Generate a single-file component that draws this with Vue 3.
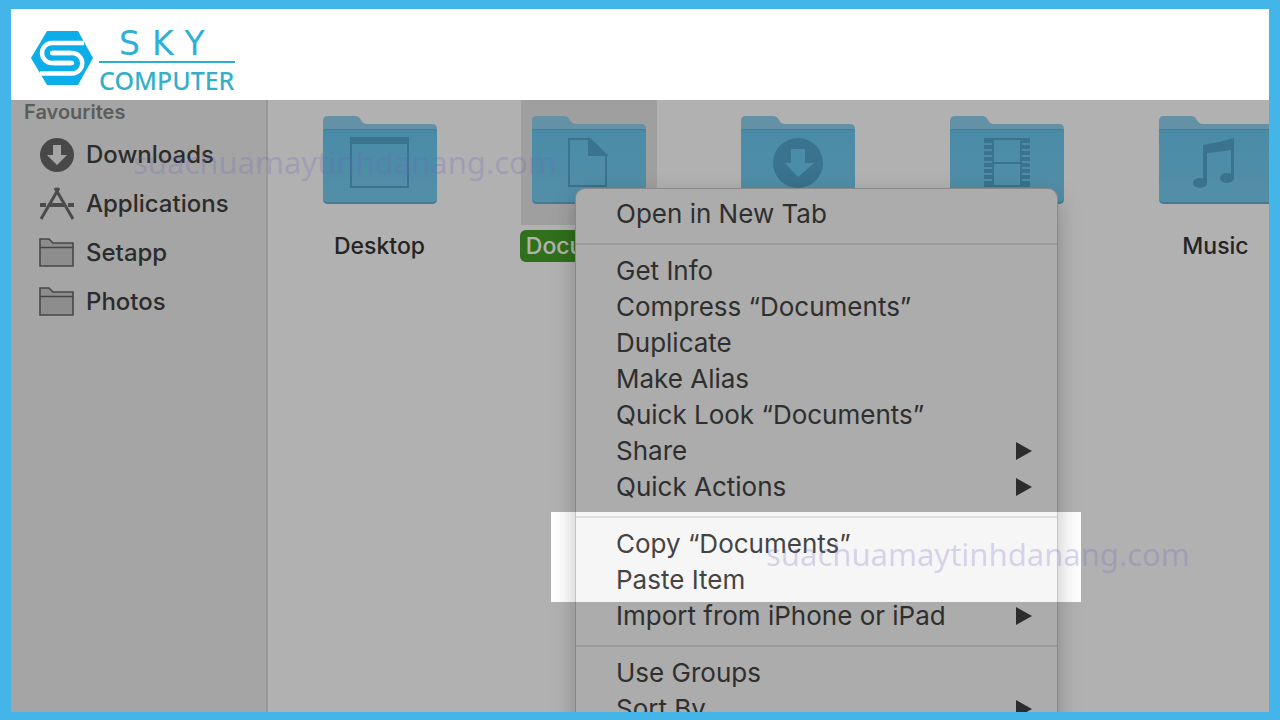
<script setup>
const places = [
  { name: 'Downloads', icon: 'download' },
  { name: 'Applications', icon: 'apps' },
  { name: 'Setapp', icon: 'folder' },
  { name: 'Photos', icon: 'folder' },
]

const folders = [
  { name: 'Desktop', glyph: 'window' },
  { name: 'Documents', glyph: 'page', selected: true },
  { name: 'Downloads', glyph: 'arrow' },
  { name: 'Movies', glyph: 'film' },
  { name: 'Music', glyph: 'note' },
]

const groups = [
  [{ label: 'Open in New Tab' }],
  [
    { label: 'Get Info' },
    { label: 'Compress “Documents”' },
    { label: 'Duplicate' },
    { label: 'Make Alias' },
    { label: 'Quick Look “Documents”' },
    { label: 'Share', sub: true },
    { label: 'Quick Actions', sub: true },
  ],
  [
    { label: 'Copy “Documents”' },
    { label: 'Paste Item' },
    { label: 'Import from iPhone or iPad', sub: true },
  ],
  [{ label: 'Use Groups' }, { label: 'Sort By', sub: true }],
]
</script>

<template>
  <div class="frame">
    <header class="brand">
      <svg class="mark" viewBox="0 0 64 64" aria-hidden="true">
        <path fill="#0caeea" d="M17 4H48L63 31L48 58H17L1 31Z" />
        <g fill="none" stroke="#fff" stroke-width="4.4">
          <path d="M54 16H22A10 10 0 0 0 22 36H41" />
          <path d="M10 46.500H42A10 10 0 0 0 42 26H22" />
          <path stroke-linecap="round" d="M22 26H40M24 36H42" />
        </g>
      </svg>
      <div class="words">
        <span class="sky">SKY</span>
        <span class="computer">COMPUTER</span>
      </div>
    </header>

    <main class="stage">
      <nav class="sidebar" aria-label="Favourites">
        <h2>Favourites</h2>
        <a v-for="p in places" :key="p.name" href="#" class="place">
          <svg viewBox="0 0 36 36" aria-hidden="true">
            <template v-if="p.icon === 'download'">
              <circle cx="18" cy="18" r="17" fill="#686868" />
              <path fill="#ededed" d="M14 8h8v10h6L18 28 8 18h6z" />
            </template>
            <g v-else-if="p.icon === 'apps'" fill="none" stroke="#6c6c6c" stroke-width="3">
              <path d="M16 2L34 33M20 2L2 33" />
              <path stroke-width="4" d="M1 19H7M11 19H25M29 19H35" />
            </g>
            <g v-else stroke="#666" stroke-width="1.6">
              <path fill="#cacaca" d="M1 4h9l4 4h20v23H1z" />
              <path fill="none" d="M1 12.500h33" />
            </g>
          </svg>
          <span>{{ p.name }}</span>
        </a>
      </nav>

      <section class="files">
        <figure v-for="f in folders" :key="f.name" class="file" :class="{ selected: f.selected }">
          <div class="tile">
            <svg viewBox="0 0 114 90" aria-hidden="true">
              <defs>
                <linearGradient :id="'face-' + f.name" x1="0" y1="0" x2="0" y2="1">
                  <stop offset="0" stop-color="#69c8f0" />
                  <stop offset="1" stop-color="#78cdf0" />
                </linearGradient>
              </defs>
              <path fill="#90d0ec" d="M0 30V6q0-5 5-5H32q4 0 6 4t6 4H109q5 0 5 5V30z" />
              <path fill="#5fb0d6" d="M0 16q0-2 3-2H111q3 0 3 2V84q0 5-5 5H5q-5 0-5-5z" />
              <path :fill="'url(#face-' + f.name + ')'" d="M0 17q0-2 3-2H111q3 0 3 2V83q0 4-5 4H5q-5 0-5-4z" />
              <g v-if="f.glyph === 'window'" fill="none" stroke="#52a5cb" stroke-width="2">
                <rect x="28" y="23" width="57" height="49" />
                <path stroke-width="6" d="M28 26H85" />
              </g>
              <g v-else-if="f.glyph === 'page'" stroke="#52a5cb" stroke-width="2">
                <path fill="none" d="M37 24H58L74 40V71H37z" />
                <path fill="#52a5cb" d="M57 24V40H74z" />
              </g>
              <g v-else-if="f.glyph === 'arrow'">
                <circle cx="57" cy="48" r="25" fill="#52a5cb" />
                <path fill="#6ccbf3" d="M50 34h14v14h9L57 62 44 48h6z" />
              </g>
              <g v-else-if="f.glyph === 'film'" fill="none" stroke="#52a5cb">
                <path stroke-width="8" stroke-dasharray="4 2" d="M38 24V72M76 24V72" />
                <path stroke-width="2" d="M34 24H80M43 23V72M71 23V72M43 48H71M34 71H80" />
              </g>
              <g v-else fill="#52a5cb">
                <path d="M44 30Q60 28 75 23V63H72V35Q60 37 48 38V68H44z" />
                <ellipse cx="41" cy="68" rx="7" ry="5" />
                <ellipse cx="68" cy="63" rx="7" ry="5" />
              </g>
            </svg>
          </div>
          <figcaption>{{ f.name }}</figcaption>
        </figure>
      </section>

      <div class="menu" role="menu">
        <div v-for="(g, i) in groups" :key="i" class="group" role="group">
          <button v-for="item in g" :key="item.label" type="button" role="menuitem">
            <span>{{ item.label }}</span>
            <svg v-if="item.sub" viewBox="0 0 16 18" aria-hidden="true">
              <path fill="#404040" d="M0 0L16 9L0 18z" />
            </svg>
          </button>
        </div>
      </div>

      <div class="spotlight"></div>
      <span class="watermark first">suachuamaytinhdanang.com</span>
      <span class="watermark second">suachuamaytinhdanang.com</span>
    </main>
  </div>
</template>

<style>
body {
  margin: 0;
}
</style>

<style scoped>
.frame {
  box-sizing: border-box;
  min-height: 100vh;
  display: flex;
  flex-direction: column;
  border: solid #43b5e8;
  border-width: 9px 11px 8px;
  background: #fff;
  font-family: Inter, "Liberation Sans", sans-serif;
}

.brand {
  box-sizing: border-box;
  height: 91px;
  display: flex;
  align-items: flex-start;
  gap: 5px;
  padding: 18px 19px 0;
}

.mark {
  width: 64px;
  height: 64px;
}

.words {
  display: flex;
  flex-direction: column;
  width: 136px;
  font-family: "Noto Sans", "Open Sans", sans-serif;
  color: #2bb0d8;
}

.sky {
  padding-left: 20px;
  border-bottom: 2px solid #2fafd0;
  font-family: "DejaVu Sans", sans-serif;
  font-size: 33px;
  line-height: 34px;
  letter-spacing: 12px;
  white-space: nowrap;
}

.computer {
  font-size: 25px;
  line-height: 34px;
  font-weight: 500;
  color: #35afc9;
}

.stage {
  position: relative;
  flex: 1;
  display: flex;
  overflow: hidden;
}

.sidebar {
  box-sizing: border-box;
  flex: 0 0 257px;
  border-right: 2px solid #d9d9d9;
  background: #ededed;
}

h2 {
  margin: 0 0 6px;
  padding-left: 13px;
  font-size: 20px;
  line-height: 24px;
  font-weight: 600;
  color: #858585;
}

.place {
  display: flex;
  align-items: center;
  gap: 11px;
  height: 49px;
  padding-left: 28px;
  font-size: 24px;
  font-weight: 500;
  color: #404040;
  text-decoration: none;
}

.place svg {
  width: 36px;
  height: 36px;
}

.files {
  flex: 1;
  min-width: 0;
  display: flex;
  padding-left: 7px;
  overflow: hidden;
  background: #fefefe;
}

.file {
  flex: 0 0 209px;
  display: flex;
  flex-direction: column;
  align-items: center;
  gap: 5px;
  margin: 0;
}

.tile {
  box-sizing: border-box;
  width: 136px;
  height: 125px;
  padding: 15px 11px;
}

.tile svg {
  display: block;
  width: 114px;
  height: 90px;
}

figcaption {
  padding: 0 6px;
  border-radius: 6px;
  font-size: 23px;
  line-height: 32px;
  font-weight: 500;
  color: #343434;
}

.selected .tile {
  background: #e4e4e4;
}

.selected figcaption {
  background: #45a028;
  color: #fff;
}

.menu {
  position: absolute;
  left: 565px;
  top: 89px;
  width: 481px;
  padding: 7px 0;
  border-radius: 9px 9px 0 0;
  background: #f6f6f6;
  box-shadow: 0 0 0 1px #c4c4c4, 0 8px 24px rgba(0, 0, 0, 0.25);
}

.group + .group::before {
  content: "";
  display: block;
  height: 2px;
  margin: 11px 0 8px;
  background: #dedede;
}

.menu button {
  display: flex;
  align-items: center;
  justify-content: space-between;
  width: 100%;
  height: 36px;
  padding: 0 25px 0 40px;
  border: 0;
  background: none;
  font: 400 26px/36px Inter, "Liberation Sans", sans-serif;
  color: #444;
  text-align: left;
}

.menu svg {
  width: 16px;
  height: 18px;
}

.spotlight {
  position: absolute;
  left: 540px;
  top: 412px;
  width: 530px;
  height: 90px;
  box-shadow: 0 0 0 200vmax rgba(0, 0, 0, 0.3);
  pointer-events: none;
}

.watermark {
  position: absolute;
  font: 400 31px/40px "Noto Sans", "Open Sans", sans-serif;
  color: rgba(110, 100, 190, 0.25);
  pointer-events: none;
}

.first {
  left: 122px;
  top: 42px;
}

.second {
  left: 755px;
  top: 434px;
}
</style>
